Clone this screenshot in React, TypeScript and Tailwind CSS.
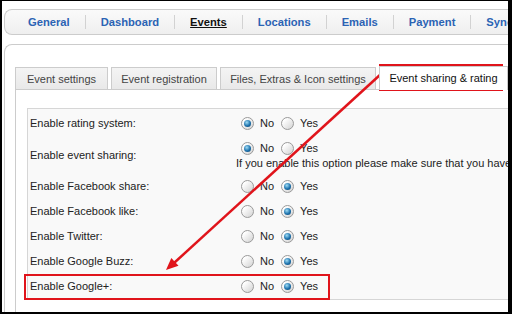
import React from "react";

const NAV = ["General", "Dashboard", "Events", "Locations", "Emails", "Payment", "Synchronization"];

const TABS = [
  { label: "Event settings", w: "w-[93px]" },
  { label: "Event registration", w: "w-[106px]" },
  { label: "Files, Extras & Icon settings", w: "w-[156px]" },
];

type Row = { label: string; yes: boolean; h: string; note?: string };

const ROWS: Row[] = [
  { label: "Enable rating system:", yes: false, h: "h-[28px]" },
  {
    label: "Enable event sharing:",
    yes: false,
    h: "h-[37px]",
    note: "If you enable this option please make sure that you have the correct Facebook settings",
  },
  { label: "Enable Facebook share:", yes: true, h: "h-[25px]" },
  { label: "Enable Facebook like:", yes: true, h: "h-[25px]" },
  { label: "Enable Twitter:", yes: true, h: "h-[25px]" },
  { label: "Enable Google Buzz:", yes: true, h: "h-[25px]" },
  { label: "Enable Google+:", yes: true, h: "h-[25px]" },
];

function Radio({ checked }: { checked: boolean }) {
  return (
    <span className="flex h-[13px] w-[13px] shrink-0 items-center justify-center rounded-full border border-[#9a9a9a] bg-[linear-gradient(135deg,#ffffff_20%,#d2d2d2)]">
      {checked && (
        <span className="h-[7px] w-[7px] rounded-full bg-[radial-gradient(circle_at_40%_35%,#9fdcf5,#1d72ad_55%,#0b3c63)]" />
      )}
    </span>
  );
}

function YesNo({ yes }: { yes: boolean }) {
  return (
    <div className="flex h-[14px] items-center">
      <span className="ml-[5px] mr-[6px]">
        <Radio checked={!yes} />
      </span>
      <span>No</span>
      <span className="ml-[7px] mr-[6px]">
        <Radio checked={yes} />
      </span>
      <span>Yes</span>
    </div>
  );
}

export default function App() {
  return (
    <div className="h-[314px] w-[512px] overflow-hidden border-b-2 border-l-2 border-r-4 border-t border-black bg-white font-['Liberation_Sans',Arial,sans-serif]">
      <div className="relative flex h-full w-full flex-col overflow-hidden">
        {/* top menu */}
        <div className="ml-[2px] mt-[8px] flex h-[26px] w-[600px] shrink-0 items-center rounded-l-[8px] border border-r-0 border-[#cccccc] bg-[linear-gradient(#fafafa,#efefef)] pl-[8px] text-[11.2px] font-bold">
          {NAV.map((item, i) => (
            <React.Fragment key={item}>
              {i > 0 && <span className="h-[14px] w-px bg-[#d2d2d2]" />}
              <span
                className={
                  item === "Events"
                    ? "whitespace-nowrap px-[15px] text-[#111111] underline"
                    : "whitespace-nowrap px-[15px] text-[#2b63b4]"
                }
              >
                {item}
              </span>
            </React.Fragment>
          ))}
        </div>

        {/* config panel */}
        <div className="ml-[2px] mt-[9px] flex w-[600px] flex-1 flex-col rounded-tl-[8px] border border-r-0 border-b-0 border-[#cccccc] pl-[10px] pt-[21px]">
          <div className="-mb-px flex items-end gap-[3px] text-[11px] text-[#444444]">
            {TABS.map((t) => (
              <div
                key={t.label}
                className={`${t.w} flex h-[23px] items-center justify-center whitespace-nowrap border border-b-0 border-[#cccccc] bg-[linear-gradient(#f4f4f4,#e8e8e8)]`}
              >
                {t.label}
              </div>
            ))}
            <div className="relative z-10 flex h-[24px] w-[129px] items-center justify-center whitespace-nowrap border border-b-0 border-[#cccccc] bg-white text-[#111111]">
              Event sharing &amp; rating
            </div>
          </div>

          <div className="flex-1 border-l border-t border-[#cccccc] pl-[11px] pt-[18px]">
            <div className="w-[560px] border border-[#d6d6d6] bg-[#f9f9f9] text-[11px] text-[#222222]">
              {ROWS.map((r) => (
                <div key={r.label} className={`flex items-center ${r.h}`}>
                  <div className="w-[208px] shrink-0 pl-[2px]">{r.label}</div>
                  <div className="flex flex-col">
                    <YesNo yes={r.yes} />
                    {r.note && <div className="mt-[1px] whitespace-nowrap leading-[14px]">{r.note}</div>}
                  </div>
                </div>
              ))}
            </div>
          </div>
        </div>

        {/* annotations */}
        <div className="pointer-events-none absolute left-[377px] top-[63px] h-[27px] w-[124px] border-2 border-[#e0141b]" />
        <div className="pointer-events-none absolute left-[22px] top-[273px] h-[26px] w-[306px] border-2 border-[#e0141b]" />
        <svg className="pointer-events-none absolute left-0 top-0" width="506" height="311" viewBox="0 0 506 311">
          <line x1="379" y1="73" x2="172" y2="262" stroke="#e0141b" strokeWidth="2.5" />
          <polygon points="164,269 176.5,264.8 169.3,256.9" fill="#e0141b" />
        </svg>
      </div>
    </div>
  );
}
